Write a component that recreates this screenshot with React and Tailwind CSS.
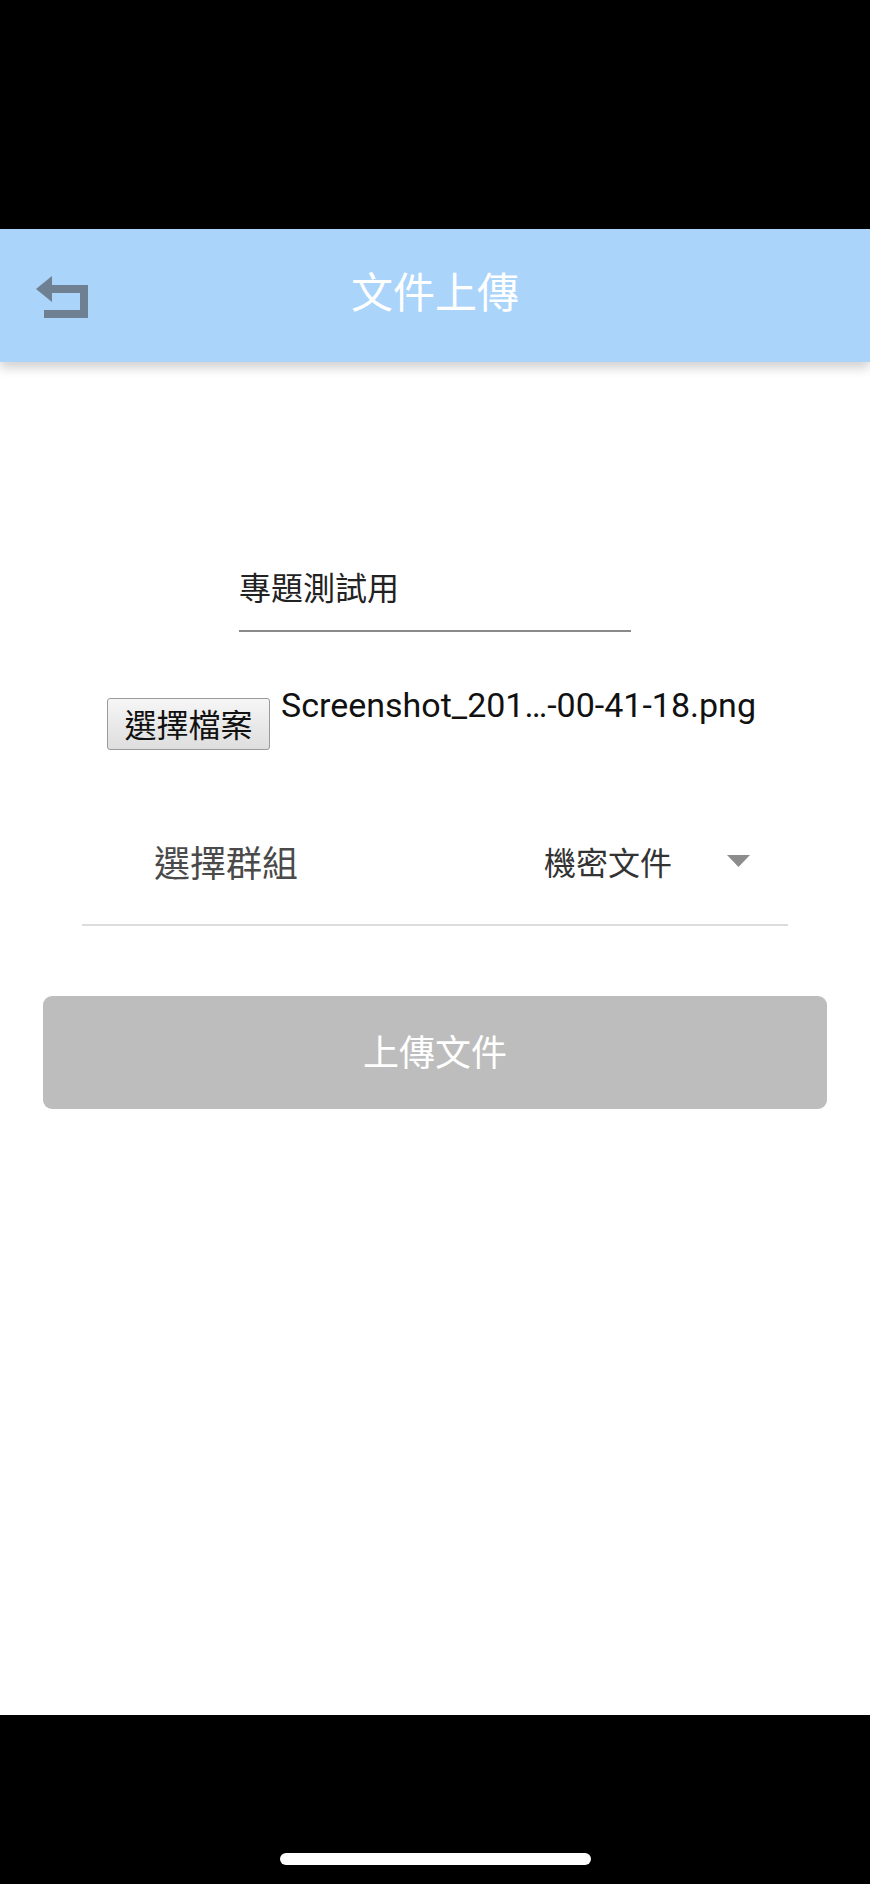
import React from 'react';

const cjk = { fontFamily: '"Noto Sans CJK TC", "Noto Sans", sans-serif' };

const BackIcon = () => (
    <svg width="52" height="42" viewBox="0 0 52 42" fill="#6f8093">
        <path d="M0 13 L16 0 L16 9 L52 9 L52 42 L8 42 L8 34 L44 34 L44 17 L16 17 L16 26 Z" />
    </svg>
);

const App = () => {
    return (
        <div className="w-[870px] h-[1884px] flex flex-col bg-white" style={cjk}>
            {/* status bar */}
            <div className="h-[229px] bg-black flex-shrink-0" />

            {/* header */}
            <header className="relative h-[133px] bg-[#aad4fa] grid grid-cols-[120px_1fr_120px] items-center flex-shrink-0 shadow-[0_6px_10px_rgba(0,0,0,0.18)] z-10">
                <div className="pl-[36px] pt-[2px] flex items-center">
                    <BackIcon />
                </div>
                <h1 className="pb-[12px] text-center text-white text-[42px] leading-none font-normal">文件上傳</h1>
                <div />
            </header>

            {/* form */}
            <main className="flex-1 flex flex-col pt-[208px]">
                <div className="mx-auto w-[392px] flex flex-col">
                    <span className="text-[32px] leading-none text-[#222]">專題測試用</span>
                    <div className="mt-[28px] h-[2px] bg-[#8a8a8a]" />
                </div>

                <div className="mt-[56px] pl-[107px] flex items-start">
                    <button className="mt-[10px] w-[163px] h-[52px] pb-[3px] flex items-center justify-center rounded-[3px] border border-[#9a9a9a] bg-gradient-to-b from-[#f6f6f6] to-[#dedede] text-[32px] leading-none text-[#111]">
                        選擇檔案
                    </button>
                    <span
                        className="ml-[11px] text-[34px] leading-none text-[#111]"
                        style={{ fontFamily: 'Roboto, "Liberation Sans", sans-serif' }}
                    >
                        Screenshot_201…-00-41-18.png
                    </span>
                </div>

                <div className="mt-[56px] mx-[82px] h-[120px] pb-[8px] flex items-center border-b-2 border-[#dcdcdc]">
                    <span className="ml-[72px] text-[36px] leading-none text-[#4a4a4a]">選擇群組</span>
                    <span className="ml-auto text-[32px] leading-none text-[#333]">機密文件</span>
                    <svg className="ml-[55px] mr-[38px]" width="23" height="12" viewBox="0 0 23 12">
                        <path d="M0 0 L23 0 L11.5 12 Z" fill="#8c8c8c" />
                    </svg>
                </div>

                <button className="mt-[70px] mx-[43px] h-[113px] pb-[6px] rounded-[9px] bg-[#bdbdbd] text-white text-[36px] leading-none">
                    上傳文件
                </button>
            </main>

            {/* navigation bar */}
            <div className="h-[169px] bg-black flex-shrink-0 flex justify-center">
                <div className="mt-[138px] w-[311px] h-[12px] rounded-full bg-white" />
            </div>
        </div>
    );
};

export default App;
